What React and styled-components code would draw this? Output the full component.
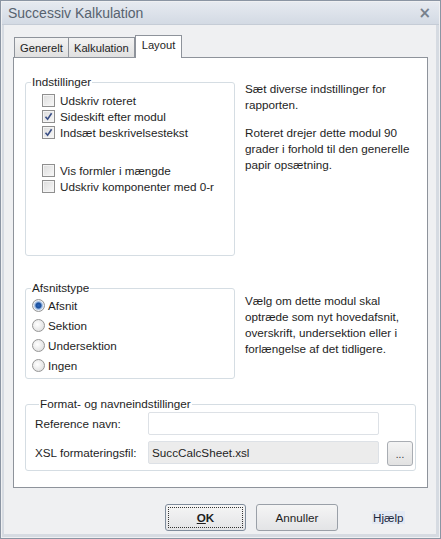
import React from "react"
import styled, { createGlobalStyle, css } from "styled-components"

const Global = createGlobalStyle`
  html, body { margin: 0; padding: 0; background: #fff; }
  body { font-family: "Liberation Sans", Arial, sans-serif; font-size: 11.7px; color: #1e1e1e; }
  * { box-sizing: border-box; }
`

const checks = [
  { label: "Udskriv roteret", on: false },
  { label: "Sideskift efter modul", on: true },
  { label: "Indsæt beskrivelsestekst", on: true },
  { label: "Vis formler i mængde", on: false, spaced: true },
  { label: "Udskriv komponenter med 0-r", on: false },
]

const radios = ["Afsnit", "Sektion", "Undersektion", "Ingen"]

function CheckMark() {
  return (
    <svg width="9" height="9" viewBox="0 0 9 9">
      <path d="M1.5 4.8 L3.6 7.2 L7.6 1.2" fill="none" stroke="#3a4f86" strokeWidth="1.6" />
    </svg>
  )
}

export default function App() {
  return (
    <>
      <Global />
      <Window>
        <TitleBar>
          <Title>Successiv Kalkulation</Title>
          <Close>×</Close>
        </TitleBar>
        <Client>
          <Tabs>
            <Tab>Generelt</Tab>
            <Tab>Kalkulation</Tab>
            <Tab active>Layout</Tab>
          </Tabs>
          <Panel>
            <Section>
              <Group height={181}>
                <Legend>Indstillinger</Legend>
                <CheckList>
                  {checks.map((c) => (
                    <CheckRow key={c.label} spaced={c.spaced}>
                      <Box>{c.on && <CheckMark />}</Box>
                      {c.label}
                    </CheckRow>
                  ))}
                </CheckList>
              </Group>
              <Desc>
                <p>Sæt diverse indstillinger for rapporten.</p>
                <p>Roteret drejer dette modul 90 grader i forhold til den generelle papir opsætning.</p>
              </Desc>
            </Section>
            <Section gap={18} lift={2}>
              <Group height={98}>
                <Legend>Afsnitstype</Legend>
                <RadioList>
                  {radios.map((r, i) => (
                    <RadioRow key={r}>
                      <Radio on={i === 0} />
                      {r}
                    </RadioRow>
                  ))}
                </RadioList>
              </Group>
              <Desc top={12}>
                <p>Vælg om dette modul skal optræde som nyt hovedafsnit, overskrift, undersektion eller i forlængelse af det tidligere.</p>
              </Desc>
            </Section>
            <FormatGroup>
              <Legend>Format- og navneindstillinger</Legend>
              <FieldGrid>
                <FieldLabel>Reference navn:</FieldLabel>
                <Input />
                <span />
                <FieldLabel>XSL formateringsfil:</FieldLabel>
                <Input readOnly>SuccCalcSheet.xsl</Input>
                <Browse>...</Browse>
              </FieldGrid>
            </FormatGroup>
          </Panel>
          <Buttons>
            <Button focused>
              <Focus>
                <u>O</u>K
              </Focus>
            </Button>
            <Button>Annuller</Button>
            <Help>Hjælp</Help>
          </Buttons>
        </Client>
      </Window>
    </>
  )
}

const Window = styled.div`
  width: 441px;
  height: 539px;
  display: flex;
  flex-direction: column;
  background: #eff0f2;
  border: 1px solid #8b95a3;
`

const TitleBar = styled.div`
  height: 23px;
  margin: 1px 1px 0;
  display: flex;
  align-items: center;
  justify-content: space-between;
  padding: 0 8px 0 6px;
  background: linear-gradient(#e6eaf0, #d3dae4);
  border-bottom: 1px solid #c5ccd6;
`

const Title = styled.div`
  font-family: "Liberation Sans", Arial, sans-serif;
  font-size: 14px;
  color: #57626f;
`

const Close = styled.div`
  font-family: "DejaVu Sans", sans-serif;
  font-size: 15px;
  font-weight: bold;
  color: #76808c;
  line-height: 1;
`

const Client = styled.div`
  flex: 1;
  display: flex;
  flex-direction: column;
  padding: 10px 8px 0 9px;
  border-left: 2px solid #d6dbe2;
  border-right: 3px solid #d6dbe2;
  border-bottom: 3px solid #d6dbe2;
  margin: 0 1px 1px;
`

const Tabs = styled.div`
  display: flex;
  align-items: flex-end;
  height: 22px;
  padding-left: 1px;
  position: relative;
  z-index: 1;
`

const Tab = styled.div`
  height: 20px;
  padding: 4px 5px 0 5px;
  font-size: 11.2px;
  border: 1px solid #8e939b;
  border-bottom: none;
  margin-right: -1px;
  background: linear-gradient(#f3f3f3, #e0e0e0);
  color: #1e1e1e;
  ${(p) =>
    p.active &&
    css`
      height: 23px;
      padding: 3px 6px 0 6px;
      background: #fff;
      margin-bottom: -1px;
      margin-left: 1px;
    `}
`

const Panel = styled.div`
  height: 431px;
  background: #fff;
  border: 1px solid #8e939b;
  padding: 17px 12px 0 11px;
  display: flex;
  flex-direction: column;
`

const Section = styled.div`
  display: flex;
  gap: 10px;
  margin-top: -${(p) => p.lift || 0}px;
  margin-bottom: ${(p) => p.gap || 27}px;
`

const Group = styled.fieldset`
  width: 210px;
  min-inline-size: 0;
  height: ${(p) => p.height}px;
  margin: 0;
  padding: 0;
  border: 1px solid #d5dde3;
  border-radius: 3px;
`

const Legend = styled.legend`
  margin-left: 5px;
  padding: 0 1px;
  line-height: 14px;
  color: #1e1e1e;
`

const CheckList = styled.div`
  display: flex;
  flex-direction: column;
  padding: 3px 0 0 16px;
`

const CheckRow = styled.div`
  display: flex;
  align-items: center;
  gap: 5px;
  height: 16px;
  margin-top: ${(p) => (p.spaced ? 22 : 0)}px;
`

const Box = styled.span`
  width: 13px;
  height: 13px;
  display: flex;
  align-items: center;
  justify-content: center;
  border: 1px solid #8f8f8f;
  background: linear-gradient(135deg, #dcdcdc, #f8f8f8);
  box-shadow: inset 0 0 0 1px #f4f4f4;
`

const RadioList = styled.div`
  display: flex;
  flex-direction: column;
  padding: 0 0 0 6px;
`

const RadioRow = styled.div`
  display: flex;
  align-items: center;
  gap: 3px;
  height: 20px;
`

const Radio = styled.span`
  width: 13px;
  height: 13px;
  border-radius: 50%;
  border: 1px solid #969696;
  background: radial-gradient(circle at 40% 40%, #fff, #d8d8d8);
  ${(p) =>
    p.on &&
    css`
      background: radial-gradient(circle at 50% 50%, #2a63b8 0, #1b4f9c 2.5px, #8fb0dc 3.5px, #e8eef6 5px, #d5d5d5 6px);
    `}
`

const Desc = styled.div`
  padding-top: ${(p) => p.top || 6}px;
  width: 168px;
  line-height: 16px;
  color: #1e1e1e;
  p {
    margin: 0 0 12px;
  }
`

const FormatGroup = styled.fieldset`
  width: 391px;
  min-inline-size: 0;
  height: 74px;
  margin: 0;
  padding: 0 0 0 8px;
  border: 1px solid #d5dde3;
  border-radius: 3px;
`

const FieldGrid = styled.div`
  display: grid;
  grid-template-columns: 106px 231px 26px;
  grid-template-rows: 23px 25px;
  column-gap: 8px;
  row-gap: 6px;
  align-items: start;
  padding-top: 1px;
`

const FieldLabel = styled.span`
  padding: 5px 0 0 1px;
`

const Input = styled.div`
  height: 23px;
  border: 1px solid #dde1e6;
  border-radius: 2px;
  padding: 4px 3px 0;
  background: ${(p) => (p.readOnly ? "#ececec" : "#fff")};
`

const Browse = styled.div`
  height: 25px;
  border: 1px solid #a9adb3;
  border-radius: 3px;
  background: linear-gradient(#f4f4f4, #e2e2e2);
  display: flex;
  align-items: center;
  justify-content: center;
  font-size: 10px;
  color: #333;
  padding-top: 2px;
`

const Buttons = styled.div`
  display: flex;
  align-items: center;
  padding: 16px 0 0 152px;
`

const Button = styled.div`
  width: ${(p) => (p.focused ? 81 : 82)}px;
  height: 27px;
  margin-right: 10px;
  border: 1px solid ${(p) => (p.focused ? "#7f8c9c" : "#9aa0a8")};
  border-radius: 3px;
  background: linear-gradient(#f5f5f5, #e3e4e6);
  display: flex;
  align-items: center;
  justify-content: center;
  padding: ${(p) => (p.focused ? "2px" : "0")};
  color: #1e1e1e;
`

const Focus = styled.span`
  flex: 1;
  align-self: stretch;
  display: flex;
  align-items: center;
  justify-content: center;
  border: 1px dotted #333;
  font-weight: bold;
`

const Help = styled.span`
  margin-left: 24px;
  padding: 0 1px;
  background: #e3e9f3;
  color: #1e2a40;
`
